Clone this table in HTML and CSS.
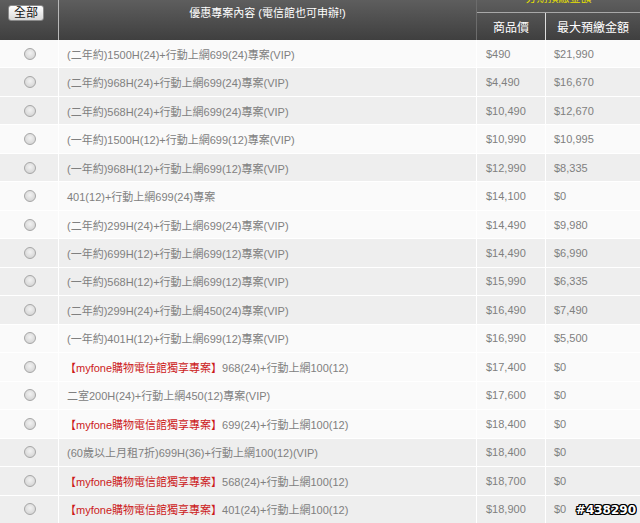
FILE: index.html
```html
<!DOCTYPE html>
<html>
<head>
<meta charset="utf-8">
<link rel="stylesheet" href="styles.css">
</head>
<body>
<div class="page">
  <div class="head">
    <div class="h-sel"><span class="btn">全部</span></div>
    <div class="h-title">優惠專案內容 (電信館也可申辦!)</div>
    <div class="h-right">
      <div class="h-top"><span class="yellow">分期預繳金額</span></div>
      <div class="h-bottom">
        <div class="h-price">商品價</div>
        <div class="h-max">最大預繳金額</div>
      </div>
    </div>
  </div>
  <div class="body">
    <div class="row w"><div class="c1"><span class="radio"></span></div><div class="c2">(二年約)1500H(24)+行動上網699(24)專案(VIP)</div><div class="c3">$490</div><div class="c4">$21,990</div></div>
    <div class="row g"><div class="c1"><span class="radio"></span></div><div class="c2">(二年約)968H(24)+行動上網699(24)專案(VIP)</div><div class="c3">$4,490</div><div class="c4">$16,670</div></div>
    <div class="row g"><div class="c1"><span class="radio"></span></div><div class="c2">(二年約)568H(24)+行動上網699(24)專案(VIP)</div><div class="c3">$10,490</div><div class="c4">$12,670</div></div>
    <div class="row w"><div class="c1"><span class="radio"></span></div><div class="c2">(一年約)1500H(12)+行動上網699(12)專案(VIP)</div><div class="c3">$10,990</div><div class="c4">$10,995</div></div>
    <div class="row g"><div class="c1"><span class="radio"></span></div><div class="c2">(一年約)968H(12)+行動上網699(12)專案(VIP)</div><div class="c3">$12,990</div><div class="c4">$8,335</div></div>
    <div class="row w"><div class="c1"><span class="radio"></span></div><div class="c2">401(12)+行動上網699(24)專案</div><div class="c3">$14,100</div><div class="c4">$0</div></div>
    <div class="row w"><div class="c1"><span class="radio"></span></div><div class="c2">(二年約)299H(24)+行動上網699(24)專案(VIP)</div><div class="c3">$14,490</div><div class="c4">$9,980</div></div>
    <div class="row g"><div class="c1"><span class="radio"></span></div><div class="c2">(一年約)699H(12)+行動上網699(12)專案(VIP)</div><div class="c3">$14,490</div><div class="c4">$6,990</div></div>
    <div class="row g"><div class="c1"><span class="radio"></span></div><div class="c2">(一年約)568H(12)+行動上網699(12)專案(VIP)</div><div class="c3">$15,990</div><div class="c4">$6,335</div></div>
    <div class="row g"><div class="c1"><span class="radio"></span></div><div class="c2">(二年約)299H(24)+行動上網450(24)專案(VIP)</div><div class="c3">$16,490</div><div class="c4">$7,490</div></div>
    <div class="row w"><div class="c1"><span class="radio"></span></div><div class="c2">(一年約)401H(12)+行動上網699(12)專案(VIP)</div><div class="c3">$16,990</div><div class="c4">$5,500</div></div>
    <div class="row w"><div class="c1"><span class="radio"></span></div><div class="c2"><span class="red">【myfone購物電信館獨享專案】</span>968(24)+行動上網100(12)</div><div class="c3">$17,400</div><div class="c4">$0</div></div>
    <div class="row w"><div class="c1"><span class="radio"></span></div><div class="c2">二室200H(24)+行動上網450(12)專案(VIP)</div><div class="c3">$17,600</div><div class="c4">$0</div></div>
    <div class="row w"><div class="c1"><span class="radio"></span></div><div class="c2"><span class="red">【myfone購物電信館獨享專案】</span>699(24)+行動上網100(12)</div><div class="c3">$18,400</div><div class="c4">$0</div></div>
    <div class="row g"><div class="c1"><span class="radio"></span></div><div class="c2">(60歲以上月租7折)699H(36)+行動上網100(12)(VIP)</div><div class="c3">$18,400</div><div class="c4">$0</div></div>
    <div class="row g"><div class="c1"><span class="radio"></span></div><div class="c2"><span class="red">【myfone購物電信館獨享專案】</span>568(24)+行動上網100(12)</div><div class="c3">$18,700</div><div class="c4">$0</div></div>
    <div class="row g"><div class="c1"><span class="radio"></span></div><div class="c2"><span class="red">【myfone購物電信館獨享專案】</span>401(24)+行動上網100(12)</div><div class="c3">$18,900</div><div class="c4">$0</div></div>
  </div>
  <div class="mark">#438290</div>
</div>
</body>
</html>
```

FILE: styles.css
```css
html, body {
  margin: 0;
  padding: 0;
  background: #ffffff;
}
.page {
  position: relative;
  width: 640px;
  height: 523px;
  overflow: hidden;
  font-family: "Liberation Sans", Arial, "Noto Sans CJK TC", sans-serif;
  font-size: 11px;
  color: #808080;
}
.head {
  display: grid;
  grid-template-columns: 58px 1px 417px 1px 163px;
  height: 40px;
  background: linear-gradient(#5e5e5e, #3f3f3f);
  color: #ffffff;
}
.h-sel {
  grid-column: 1;
  position: relative;
}
.btn {
  display: block;
  margin: 5px 0 0 8px;
  width: 34px;
  height: 14px;
  line-height: 14px;
  text-align: center;
  border: 1px solid #8a8a8a;
  border-radius: 3px;
  background: linear-gradient(#ffffff, #d8d8d8);
  color: #111111;
  font-size: 12px;
}
.h-title {
  grid-column: 3;
  text-align: center;
  line-height: 13px;
  padding-top: 7px;
  font-size: 11px;
  border-left: 1px solid #b8b8b8;
  margin-left: -1px;
}
.h-right {
  grid-column: 5;
  display: flex;
  flex-direction: column;
  border-left: 1px solid #6c6c6c;
  margin-left: -1px;
}
.h-top {
  height: 12px;
  overflow: hidden;
  text-align: center;
  border-bottom: 1px solid #a8a8a8;
}
.yellow {
  display: block;
  color: #e6e000;
  font-size: 11px;
  line-height: 11px;
  margin-top: -7px;
}
.h-bottom {
  flex: 1;
  display: grid;
  grid-template-columns: 68px 1px 94px;
  align-items: center;
  font-size: 12px;
}
.h-price {
  grid-column: 1;
  text-align: center;
}
.h-max {
  grid-column: 3;
  text-align: center;
  border-left: 1px solid #dddddd;
  margin-left: -1px;
  height: 100%;
  display: flex;
  align-items: center;
  justify-content: center;
}
.body {
  display: grid;
  grid-auto-rows: 27.47px;
  row-gap: 1px;
}
.row {
  display: grid;
  grid-template-columns: 58px 417px 68px 94px;
  column-gap: 1px;
}
.row > div {
  display: flex;
  align-items: center;
  white-space: nowrap;
}
.row.w > div {
  background: #fafafa;
}
.row.g > div {
  background: #eeeeee;
}
.c1 {
  justify-content: center;
}
.c2 {
  padding-left: 8px;
}
.c3 {
  padding-left: 9px;
}
.c4 {
  padding-left: 8px;
}
.radio {
  display: block;
  width: 12px;
  height: 12px;
  border-radius: 50%;
  border: 1px solid #a6a6a6;
  background: radial-gradient(circle at 50% 40%, #f2f2f2 0, #dcdcdc 60%, #cccccc 100%);
  box-sizing: border-box;
  margin-left: 1px;
}
.red {
  color: #cc1a1a;
  margin-left: -2px;
}
.mark {
  position: absolute;
  right: 4px;
  bottom: 6px;
  font-family: "DejaVu Sans", sans-serif;
  font-weight: bold;
  font-size: 12px;
  color: #ffffff;
  text-shadow: 1px 0 0 #000, -1px 0 0 #000, 0 1px 0 #000, 0 -1px 0 #000, 1px 1px 0 #000, -1px -1px 0 #000, 1px -1px 0 #000, -1px 1px 0 #000;
}
```
